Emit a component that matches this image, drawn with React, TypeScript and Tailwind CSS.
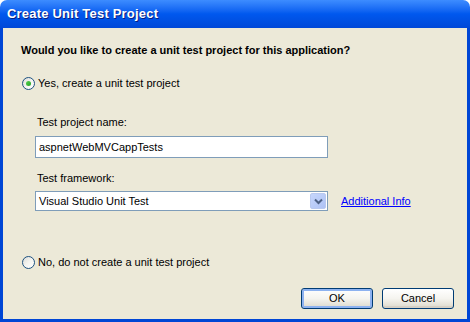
import React from 'react';

function Radio({ checked }: { checked?: boolean }) {
  return (
    <span className="w-[13px] h-[13px] rounded-full border border-[#1c5180] bg-gradient-to-br from-[#dcdcd7] via-[#f4f4f0] to-white flex items-center justify-center shrink-0">
      {checked && <span className="w-[5px] h-[5px] rounded-full bg-gradient-to-br from-[#55d151] to-[#21a121]" />}
    </span>
  );
}

function XpButton({ label, isDefault }: { label: string; isDefault?: boolean }) {
  return (
    <button
      className={`w-[72px] h-[21px] rounded-[3px] border border-[#003c74] bg-gradient-to-b from-white via-[#f5f4ef] to-[#dcd9cc] text-[11px] text-black flex items-center justify-center ${
        isDefault ? 'shadow-[inset_0_0_0_2px_#8db2f0]' : 'shadow-[inset_0_-2px_0_#d6d0c5]'
      }`}
    >
      {label}
    </button>
  );
}

export default function App() {
  return (
    <div className="w-[470px] h-[322px] flex flex-col font-['Liberation_Sans',Arial,sans-serif] text-black select-none">
      {/* Title bar */}
      <div className="h-[28px] rounded-t-[7px] bg-gradient-to-b from-[#3d8cff] via-[#0058ee] to-[#0048d8] flex items-center pl-[7px] shrink-0">
        <span className="text-white font-bold text-[13px] tracking-[0.2px] [text-shadow:1px_1px_0_#0a1e80]">Create Unit Test Project</span>
      </div>

      {/* Body */}
      <div className="flex-1 flex flex-col bg-[#ece9d8] border-x-[3px] border-b-[3px] border-[#0046d5] pl-[18px] pr-[13px] pt-[16px] pb-[10px] text-[11px] leading-[13px]">
        <div className="font-bold">Would you like to create a unit test project for this application?</div>

        <div className="mt-[20px] flex items-center gap-[3px] pl-[1px]">
          <Radio checked />
          <span>Yes, create a unit test project</span>
        </div>

        <div className="mt-[26px] pl-[16px]">Test project name:</div>
        <div className="mt-[7px] ml-[14px] w-[293px] h-[22px] border border-[#7f9db9] bg-white flex items-center px-[3px]">
          aspnetWebMVCappTests
        </div>

        <div className="mt-[14px] pl-[16px]">Test framework:</div>
        <div className="mt-[6px] ml-[14px] flex items-center">
          <div className="w-[293px] h-[20px] border border-[#7f9db9] bg-white flex items-center pl-[3px] pr-[1px]">
            <span className="flex-1">Visual Studio Unit Test</span>
            <span className="w-[16px] h-[16px] rounded-[2px] border border-[#b9c9ef] bg-gradient-to-br from-[#c6d6fc] to-[#aec2f4] flex items-center justify-center">
              <svg width="9" height="7" viewBox="0 0 9 7">
                <path d="M1 1.5 L4.5 5 L8 1.5" stroke="#4d6185" strokeWidth="2" fill="none" />
              </svg>
            </span>
          </div>
          <a className="ml-[13px] text-[#0000ff] underline">Additional Info</a>
        </div>

        <div className="mt-[45px] flex items-center gap-[3px] pl-[1px]">
          <Radio />
          <span>No, do not create a unit test project</span>
        </div>

        <div className="mt-auto flex justify-end gap-[9px]">
          <XpButton label="OK" isDefault />
          <XpButton label="Cancel" />
        </div>
      </div>
    </div>
  );
}
